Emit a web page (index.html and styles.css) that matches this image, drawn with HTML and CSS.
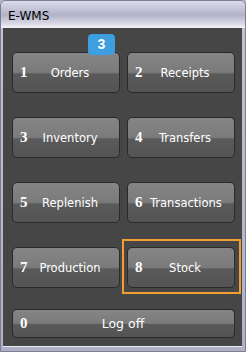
FILE: index.html
```html
<!DOCTYPE html>
<html lang="en">
<head>
    <meta charset="UTF-8">
    <meta name="viewport" content="width=device-width, initial-scale=1.0">
    <title>E-WMS</title>
    <link rel="stylesheet" href="styles.css">
</head>
<body>
    <div class="window">
        <div class="title">E-WMS</div>
        <div class="panel">
            <div class="grid">
                <button class="btn">
                    <span class="num">1</span><span class="label">Orders</span>
                    <span class="badge">3</span>
                </button>
                <button class="btn"><span class="num">2</span><span class="label">Receipts</span></button>
                <button class="btn"><span class="num">3</span><span class="label">Inventory</span></button>
                <button class="btn"><span class="num">4</span><span class="label">Transfers</span></button>
                <button class="btn"><span class="num">5</span><span class="label">Replenish</span></button>
                <button class="btn"><span class="num">6</span><span class="label">Transactions</span></button>
                <button class="btn"><span class="num">7</span><span class="label">Production</span></button>
                <button class="btn focused"><span class="num">8</span><span class="label">Stock</span></button>
            </div>
            <button class="btn logoff"><span class="num">0</span><span class="label">Log off</span></button>
        </div>
    </div>
</body>
</html>
```

FILE: styles.css
```css
html, body {
    margin: 0;
    padding: 0;
}
body {
    font-family: "DejaVu Sans", Verdana, sans-serif;
    background-color: #b4b4c8;
}
.window {
    width: 246px;
    height: 352px;
    box-sizing: border-box;
    border: 1px solid #7c7c92;
    border-radius: 6px 6px 0 0;
    background: linear-gradient(#dedeea 0, #c2c2d6 20px, #b0b0c6 100%);
    padding: 0 3px 4px 2px;
    display: flex;
    flex-direction: column;
}
.title {
    height: 27px;
    flex: none;
    font-size: 12px;
    line-height: 30px;
    color: #000;
    background: linear-gradient(#dcdcea 0, #c4c4d8 8px, #b2b2c8 14px, #d6d6e4 22px, #f4f4f8 27px);
    margin: 0 -3px 0 -2px;
    padding-left: 7px;
    border-radius: 5px 5px 0 0;
}
.panel {
    flex: 1;
    background-color: #464646;
    padding: 24px 7px 8px 9px;
    display: flex;
    flex-direction: column;
    gap: 21px;
    border-bottom: 1px solid #eeeef2;
}
.grid {
    display: grid;
    grid-template-columns: 108px 108px;
    grid-auto-rows: 41px;
    column-gap: 7px;
    row-gap: 24px;
}
.btn {
    position: relative;
    display: flex;
    align-items: center;
    margin: 0;
    padding: 0 14px 0 7px;
    border: 1px solid #2a2a2a;
    border-radius: 5px;
    background: linear-gradient(#858585 0, #7b7b7b 48%, #747474 52%, #5a5a5a 53%, #545454 100%);
    color: #fff;
    font-family: inherit;
    cursor: pointer;
    text-align: left;
}
.num {
    width: 15px;
    flex: none;
    font-family: "Liberation Serif", serif;
    font-weight: bold;
    font-size: 15px;
}
.label {
    flex: 1;
    text-align: center;
    white-space: nowrap;
    font-size: 11.5px;
}
.badge {
    position: absolute;
    left: 75px;
    top: -19px;
    width: 27px;
    height: 21px;
    border-radius: 4px;
    background-color: #3d9fe0;
    color: #fff;
    font-family: "Liberation Sans", Arial, sans-serif;
    font-weight: bold;
    font-size: 14px;
    line-height: 21px;
    text-align: center;
}
.focused::after {
    content: "";
    position: absolute;
    left: -6px;
    right: -7px;
    top: -9px;
    bottom: -7px;
    border: 2px solid #f0a030;
}
.logoff {
    height: 29px;
    padding-right: 23px;
}
.logoff .label {
    font-size: 12.5px;
}
```
